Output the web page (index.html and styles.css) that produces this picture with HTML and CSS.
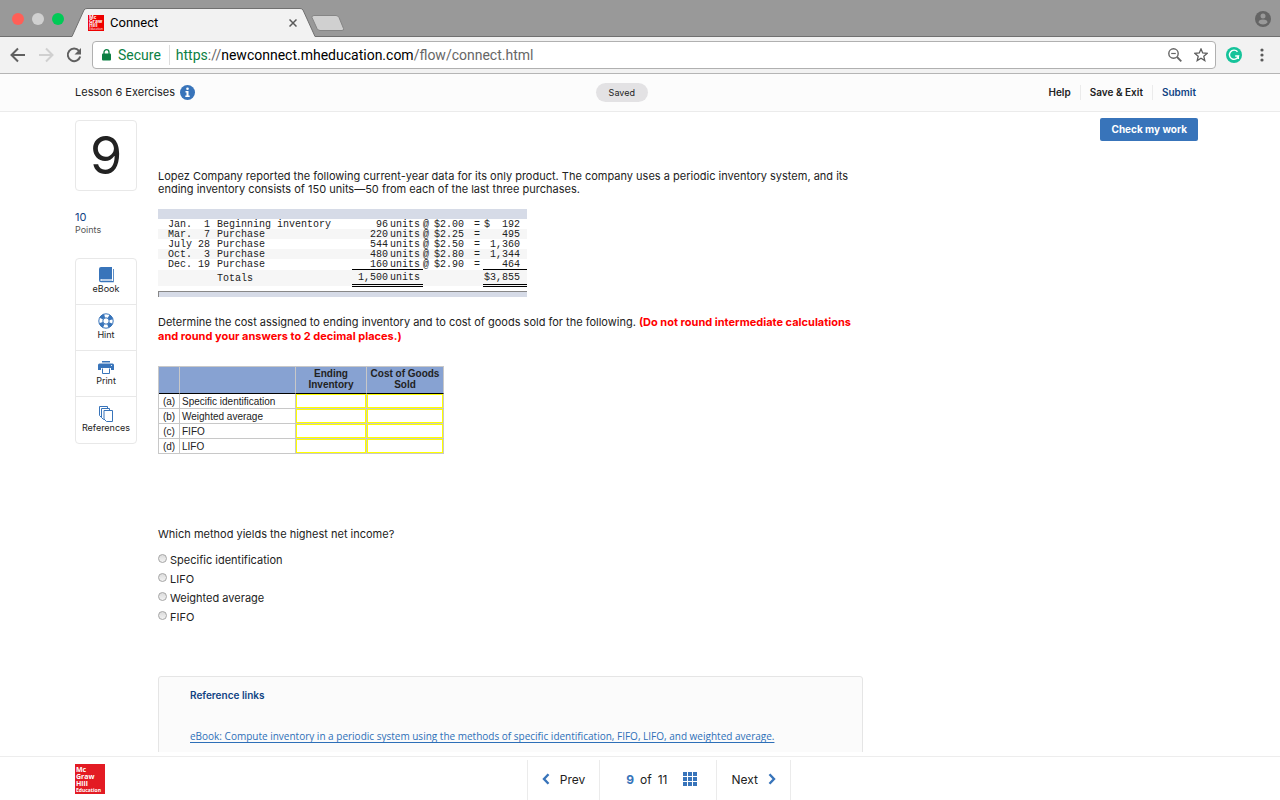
FILE: index.html
```html
<!DOCTYPE html>
<html lang="en">
<head>
    <meta charset="UTF-8">
    <meta name="viewport" content="width=device-width, initial-scale=1.0">
    <title>Connect</title>
    <link rel="stylesheet" href="styles.css">
</head>
<body>

<!-- Browser tabs -->
<div class="tab-bar">
    <span class="light red"></span>
    <span class="light gray"></span>
    <span class="light green"></span>
    <div class="tab">
        <svg class="tab-shape" viewBox="0 0 243 29" preserveAspectRatio="none">
            <path d="M0 28.500 L12 2 Q13 .5 15 .5 H228 Q230 .5 231 2 L243 28.500 V29 H0Z" fill="#f2f2f2"/>
            <path d="M0 28.500 L12 2 Q13 .5 15 .5 H228 Q230 .5 231 2 L243 28.500" fill="none" stroke="#707070"/>
        </svg>
        <span class="favicon"><b>Mc<br>Graw<br>Hill</b><i>Education</i></span>
        <span class="tab-title">Connect</span>
        <button class="tab-close" aria-label="Close tab">
            <svg width="8" height="8" viewBox="0 0 8 8"><path d="M.5 .5l7 7M7.500 .5l-7 7" stroke="#5a5a5a" stroke-width="1.500"/></svg>
        </button>
    </div>
    <svg class="new-tab" width="34" height="17" viewBox="0 0 34 17"><path d="M3 .5h22q2 0 3 2l4.500 11q.5 2-1.500 2H9q-2 0-3-2L1 2.500Q.5 .5 3 .5z" fill="#d0d0d0" stroke="#858585"/></svg>
    <svg class="profile" width="16" height="16" viewBox="0 0 16 16"><circle cx="8" cy="8" r="8" fill="#656565"/><circle cx="8" cy="5" r="2.500" fill="#999"/><path d="M3.500 11.500q0-3 4.500-3t4.500 3q-1.500 2-4.500 2t-4.500-2z" fill="#999"/></svg>
</div>

<!-- Address bar -->
<div class="toolbar">
    <button class="tool" aria-label="Back"><svg width="16" height="16" viewBox="0 0 16 16" fill="none" stroke="#606060" stroke-width="2"><path d="M15 8H2M8 1.500L1.500 8 8 14.500"/></svg></button>
    <button class="tool" aria-label="Forward"><svg width="16" height="16" viewBox="0 0 16 16" fill="none" stroke="#d0d0d0" stroke-width="2"><path d="M1 8h13M8 1.500L14.500 8 8 14.500"/></svg></button>
    <button class="tool" aria-label="Reload"><svg width="16" height="16" viewBox="0 0 16 16"><path d="M13 3.800A6.300 6.300 0 1 0 14.200 9.500" fill="none" stroke="#606060" stroke-width="2"/><path d="M15 1v6.500H8.500z" fill="#606060"/></svg></button>
    <div class="address">
        <svg width="9" height="12" viewBox="0 0 9 12"><rect y="4.500" width="9" height="7" rx="1" fill="#0b8043"/><path d="M2 5V3.200a2.500 2.500 0 0 1 5 0V5" fill="none" stroke="#0b8043" stroke-width="1.300"/></svg>
        <span class="secure">Secure</span>
        <span class="url"><span class="scheme">https</span>://<span class="host">newconnect.mheducation.com</span>/flow/connect.html</span>
        <svg class="zoom-icon" width="14" height="14" viewBox="0 0 14 14" fill="none" stroke="#666"><circle cx="5.500" cy="5.500" r="4.700" stroke-width="1.400"/><path d="M3.200 5.500h4.600" stroke-width="1.200"/><path d="M9 9l4.300 4.300" stroke-width="1.800"/></svg>
        <svg width="14" height="14" viewBox="0 0 14 14"><path d="M7 1l1.700 4 4.400.4-3.300 2.900 1 4.300L7 10.300l-3.800 2.300 1-4.300L.9 5.400l4.400-.4z" fill="none" stroke="#5c5c5c" stroke-width="1.300"/></svg>
    </div>
    <svg class="grammarly" width="16" height="16" viewBox="0 0 16 16"><circle cx="8" cy="8" r="8" fill="#15c39a"/><path d="M11.500 4.700A4.600 4.600 0 1 0 12.500 9H9.200M12.300 8.700v3.400" fill="none" stroke="#fff" stroke-width="1.400"/></svg>
    <svg width="4" height="14" viewBox="0 0 4 14" fill="#5a5a5a"><circle cx="2" cy="2" r="1.600"/><circle cx="2" cy="7" r="1.600"/><circle cx="2" cy="12" r="1.600"/></svg>
</div>

<!-- Assignment header -->
<header class="header">
    <div class="lesson">
        Lesson 6 Exercises
        <svg width="15" height="15" viewBox="0 0 15 15"><circle cx="7.500" cy="7.500" r="7.500" fill="#3874ba"/><circle cx="7.500" cy="3.800" r="1.300" fill="#fff"/><path d="M5.500 6h3v4.500h1.200V12H5.300v-1.500h1.200v-3h-1z" fill="#fff"/></svg>
    </div>
    <span class="saved">Saved</span>
    <nav class="header-links">
        <a href="#">Help</a>
        <a href="#">Save &amp; Exit</a>
        <a href="#" class="submit">Submit</a>
    </nav>
</header>

<div class="workspace">
    <aside class="sidebar">
        <div class="question-number">9</div>
        <div class="points">10</div>
        <div class="points-label">Points</div>
        <div class="resources">
            <button><svg width="16" height="16" viewBox="0 0 16 16"><path d="M3 0h11v12H3.500Q2.300 12 2.300 13t1.200 1H15V2h.8v13.300H3Q1 15.300 1 13V2q0-2 2-2z" fill="#3874ba"/><path d="M3.500 13H14" stroke="#3874ba" stroke-width=".7"/></svg>eBook</button>
            <button><svg width="16" height="16" viewBox="0 0 16 16" fill="none" stroke="#3874ba"><circle cx="8" cy="8" r="7.200"/><circle cx="8" cy="8" r="3.200"/><circle cx="8" cy="8" r="5.300" stroke-width="4" stroke-dasharray="4.160 4.160" stroke-dashoffset="-2.080"/></svg>Hint</button>
            <button><svg width="16" height="16" viewBox="0 0 16 16" fill="#3874ba"><path d="M4 2h8v1.500H4zM1.500 4.500h13Q16 4.500 16 6v5h-3V9H3v2H0V6Q0 4.500 1.500 4.500z"/><path d="M4.500 9.500v5h7v-5" fill="#fff" stroke="#3874ba"/><circle cx="13.500" cy="6.500" r=".6" fill="#fff"/></svg>Print</button>
            <button><svg width="16" height="16" viewBox="0 0 16 16" fill="#fff" stroke="#3874ba"><path d="M1.500 .5h8v11h-6l-2-2z"/><path d="M3.500 2.500h8v11h-6l-2-2z"/><path d="M6 4.500h8.500v11H8.500L6 13z"/></svg>References</button>
        </div>
    </aside>

    <main class="question">
        <p>Lopez Company reported the following current-year data for its only product. The company uses a periodic inventory system, and its ending inventory consists of 150 units—50 from each of the last three purchases.</p>

        <table class="inventory">
            <colgroup><col class="c-month"><col class="c-day"><col class="c-item"><col class="c-qty"><col class="c-units"><col class="c-at"><col class="c-price"><col class="c-eq"><col class="c-total"></colgroup>
            <thead><tr><td colspan="9"></td></tr></thead>
            <tbody>
                <tr><td>Jan.</td><td>1</td><td>Beginning inventory</td><td>96</td><td>units</td><td>@</td><td>$2.00</td><td>=</td><td>$&nbsp;&nbsp;192</td></tr>
                <tr><td>Mar.</td><td>7</td><td>Purchase</td><td>220</td><td>units</td><td>@</td><td>$2.25</td><td>=</td><td>495</td></tr>
                <tr><td>July</td><td>28</td><td>Purchase</td><td>544</td><td>units</td><td>@</td><td>$2.50</td><td>=</td><td>1,360</td></tr>
                <tr><td>Oct.</td><td>3</td><td>Purchase</td><td>480</td><td>units</td><td>@</td><td>$2.80</td><td>=</td><td>1,344</td></tr>
                <tr><td>Dec.</td><td>19</td><td>Purchase</td><td>160</td><td>units</td><td>@</td><td>$2.90</td><td>=</td><td>464</td></tr>
                <tr class="totals"><td></td><td></td><td>Totals</td><td class="sum">1,500</td><td class="sum">units</td><td></td><td></td><td></td><td class="sum">$3,855</td></tr>
            </tbody>
        </table>
        <div class="inventory-end"></div>

        <p class="task">Determine the cost assigned to ending inventory and to cost of goods sold for the following. <strong>(Do not round intermediate calculations and round your answers to 2 decimal places.)</strong></p>

        <table class="answers">
            <colgroup><col class="a-letter"><col class="a-method"><col class="a-ending"><col class="a-cogs"></colgroup>
            <thead><tr><th></th><th></th><th>Ending Inventory</th><th>Cost of Goods Sold</th></tr></thead>
            <tbody>
                <tr><td>(a)</td><td>Specific identification</td><td><input type="text" aria-label="Specific identification ending inventory"></td><td><input type="text" aria-label="Specific identification cost of goods sold"></td></tr>
                <tr><td>(b)</td><td>Weighted average</td><td><input type="text" aria-label="Weighted average ending inventory"></td><td><input type="text" aria-label="Weighted average cost of goods sold"></td></tr>
                <tr><td>(c)</td><td>FIFO</td><td><input type="text" aria-label="FIFO ending inventory"></td><td><input type="text" aria-label="FIFO cost of goods sold"></td></tr>
                <tr><td>(d)</td><td>LIFO</td><td><input type="text" aria-label="LIFO ending inventory"></td><td><input type="text" aria-label="LIFO cost of goods sold"></td></tr>
            </tbody>
        </table>

        <fieldset class="choices">
            <legend>Which method yields the highest net income?</legend>
            <label><input type="radio" name="method">Specific identification</label>
            <label><input type="radio" name="method">LIFO</label>
            <label><input type="radio" name="method">Weighted average</label>
            <label><input type="radio" name="method">FIFO</label>
        </fieldset>

        <section class="reference-links">
            <h2>Reference links</h2>
            <a href="#">eBook: Compute inventory in a periodic system using the methods of specific identification, FIFO, LIFO, and weighted average.</a>
        </section>
    </main>

    <button class="check">Check my work</button>
</div>

<footer class="footer">
    <div class="logo"><b>Mc<br>Graw<br>Hill</b><i>Education</i></div>
    <nav class="pager">
        <button><svg width="8" height="12" viewBox="0 0 8 12"><path d="M6.500 1.200L2 6l4.500 4.800" fill="none" stroke="#3874ba" stroke-width="2.400"/></svg>Prev</button>
        <div class="position"><b>9</b> <span>of</span> <span>11</span>
            <svg width="14" height="14" viewBox="0 0 14 14" fill="#3874ba"><path d="M0 0h4v4H0zM5 0h4v4H5zM10 0h4v4h-4zM0 5h4v4H0zM5 5h4v4H5zM10 5h4v4h-4zM0 10h4v4H0zM5 10h4v4H5zM10 10h4v4h-4z"/></svg>
        </div>
        <button>Next<svg width="8" height="12" viewBox="0 0 8 12"><path d="M1.500 1.200L6 6l-4.500 4.800" fill="none" stroke="#3874ba" stroke-width="2.400"/></svg></button>
    </nav>
</footer>

</body>
</html>
```
FILE: styles.css
```css
* {
    box-sizing: border-box;
}

body {
    margin: 0;
    height: 100vh;
    display: flex;
    flex-direction: column;
    overflow: hidden;
    background: #fff;
    color: #222;
    font-family: Inter, sans-serif;
    font-size: 11px;
}

button {
    font: inherit;
    color: inherit;
    background: none;
    border: none;
    padding: 0;
}

svg {
    flex: none;
}

/* Browser tabs */
.tab-bar {
    flex: none;
    display: flex;
    align-items: center;
    height: 37px;
    padding: 2px 9px 0 12px;
    background: #999;
    border-bottom: 1px solid #707070;
    font-family: Roboto, sans-serif;
}

.light {
    width: 12px;
    height: 12px;
    margin-right: 8px;
    border-radius: 50%;
}

.red { background: #ff5f57; }
.gray { background: #d0d0d0; }
.green { background: #00ca56; }

.tab {
    position: relative;
    align-self: flex-end;
    display: flex;
    align-items: center;
    width: 243px;
    height: 29px;
    margin-bottom: -1px;
    padding: 0 18px 0 16px;
}

.tab-shape {
    position: absolute;
    inset: 0;
    width: 100%;
    height: 100%;
}

.favicon,
.logo {
    position: relative;
    overflow: hidden;
    background: #e00;
    color: #fff;
    font-family: "Open Sans", sans-serif;
}

.favicon {
    width: 16px;
    height: 16px;
    padding-left: 1px;
    font-size: 5px;
    line-height: 4px;
}

.favicon i {
    display: block;
    font-size: 3px;
    font-style: normal;
    line-height: 4px;
}

.tab-title {
    position: relative;
    flex: 1;
    margin-left: 6px;
    color: #000;
    font-size: 13px;
}

.tab-close {
    position: relative;
    display: flex;
}

.new-tab {
    margin-left: -4px;
    margin-top: 9px;
}

.profile {
    margin-left: auto;
}

/* Address bar */
.toolbar {
    flex: none;
    display: flex;
    align-items: center;
    height: 37px;
    padding: 0 16px 0 10px;
    background: #f2f2f2;
    border-bottom: 1px solid #b5b5b5;
    font-family: Roboto, sans-serif;
}

.tool {
    display: flex;
    margin-right: 12px;
}

.address {
    flex: 1;
    display: flex;
    align-items: center;
    height: 28px;
    margin-right: 10px;
    margin-left: -2px;
    padding: 0 7px 0 9px;
    background: #fff;
    border: 1px solid #b0b0b0;
    border-radius: 4px;
    font-size: 14px;
}

.secure {
    margin-left: 7px;
    padding-right: 8px;
    border-right: 1px solid #ddd;
    color: #0b8043;
    line-height: 20px;
}

.url {
    flex: 1;
    margin-left: 6px;
    color: #666;
}

.scheme { color: #0b8043; }
.host { color: #000; }

.zoom-icon {
    margin-right: 12px;
}

.grammarly {
    margin-right: 18px;
}

/* Assignment header */
.header {
    flex: none;
    display: flex;
    align-items: center;
    justify-content: space-between;
    height: 38px;
    padding: 0 84px 1px 75px;
    background: #fcfcfc;
    border-bottom: 1px solid #ebebeb;
}

.lesson {
    display: flex;
    align-items: center;
    gap: 5px;
}

.saved {
    padding: 0 13px;
    border-radius: 10px;
    background: #e3e2e4;
    font-size: 9px;
    line-height: 19px;
}

.header-links {
    display: flex;
}

.header-links a {
    padding: 0 9px;
    border-right: 1px solid #ebebeb;
    color: #222;
    font-size: 10px;
    font-weight: 600;
    line-height: 15px;
    text-decoration: none;
}

.header-links a:first-child {
    padding-left: 0;
}

.header-links a:last-child {
    padding-right: 0;
    border-right: none;
}

.header-links .submit {
    color: #104383;
}

/* Question */
.workspace {
    flex: 1;
    min-height: 0;
    display: flex;
    align-items: flex-start;
    overflow: hidden;
    margin-bottom: 4px;
    padding: 0 82px 0 75px;
}

.sidebar {
    flex: none;
    width: 62px;
    margin-top: 8px;
}

.question-number {
    height: 71px;
    border: 1px solid #e8e8e8;
    border-radius: 4px;
    font-size: 52px;
    line-height: 69px;
    text-align: center;
}

.points {
    margin-top: 19px;
    color: #104383;
    line-height: 14px;
}

.points-label {
    color: #555;
    font-size: 9px;
    line-height: 12px;
}

.resources {
    margin-top: 22px;
    border: 1px solid #e8e8e8;
    border-radius: 4px;
}

.resources button {
    display: flex;
    flex-direction: column;
    align-items: center;
    justify-content: center;
    width: 100%;
    height: 46px;
    padding-bottom: 2px;
    border-bottom: 1px solid #e8e8e8;
    font-size: 9px;
    line-height: 11px;
}

.resources button:last-child {
    border-bottom: none;
}

.question {
    flex: 0 1 705px;
    margin-left: 21px;
}

.question p {
    margin: 58px 0 13px;
    line-height: 13px;
}

.question .task {
    margin: 18px 0 23px;
    line-height: 14px;
}

.task strong {
    color: #f00;
}

/* Inventory data */
.inventory {
    width: 369px;
    table-layout: fixed;
    border-collapse: collapse;
    font-family: "Liberation Mono", monospace;
    font-size: 10px;
    line-height: 8px;
}

.c-month { width: 40px; }
.c-day { width: 12px; }
.c-item { width: 142px; }
.c-qty { width: 37px; }
.c-units { width: 34px; }
.c-at { width: 11px; }
.c-price { width: 40px; }
.c-eq { width: 9px; }
.c-total { width: 44px; }

.inventory td {
    height: 10px;
    padding: 2px 0 0;
    white-space: nowrap;
}

.inventory thead td {
    background: #d6dbe7;
}

.inventory tbody tr:nth-child(even) {
    background: #f6f6f6;
}

.inventory td:first-child { padding-left: 10px; }
.inventory td:nth-child(2) { text-align: right; }
.inventory td:nth-child(3) { padding-left: 7px; }
.inventory td:nth-child(4) { padding-right: 1px; text-align: right; }
.inventory td:nth-child(5) { padding-left: 1px; }
.inventory td:nth-child(9) { padding-right: 7px; text-align: right; }

.inventory .totals td {
    height: 16px;
}

.inventory .totals .sum {
    border-top: 1px solid #000;
    border-bottom: 3px double #000;
}

.inventory-end {
    width: 369px;
    height: 6px;
    margin-top: 4px;
    background: #d6dbe7;
    border-top: 1px solid #888;
    border-left: 1px solid #888;
}

/* Answer grid */
.answers {
    width: 286px;
    table-layout: fixed;
    border-collapse: separate;
    border-spacing: 0;
    border-top: 1px solid #c8c8c8;
    border-left: 1px solid #c8c8c8;
    font-family: "Liberation Sans", Arial, sans-serif;
    font-size: 10px;
    line-height: 11px;
}

.a-letter { width: 21px; }
.a-method { width: 116px; }
.a-ending { width: 71px; }
.a-cogs { width: 77px; }

.answers th {
    height: 27px;
    padding: 0 0 2px;
    background: #87a2d2;
    border-right: 1px solid #c8c8c8;
    border-bottom: 1px solid #000;
}

.answers td {
    height: 15px;
    padding: 0 2px;
    border-right: 1px solid #c8c8c8;
    border-bottom: 1px solid #c8c8c8;
    white-space: nowrap;
}

.answers td:first-child {
    padding: 0;
    text-align: center;
}

.answers td:nth-child(n+3) {
    padding: 0;
}

.answers input {
    display: block;
    width: 100%;
    height: 14px;
    padding: 0 2px;
    border: 1px solid #ff0;
    font: inherit;
}

/* Multiple choice */
.choices {
    margin: 73px 0 0;
    padding: 0;
    border: none;
}

.choices legend {
    margin-bottom: 10px;
    padding: 0;
    line-height: 14px;
}

.choices label {
    display: flex;
    align-items: center;
    line-height: 19px;
}

.choices input {
    appearance: none;
    width: 9px;
    height: 9px;
    margin: 0 3px 4px 0;
    border: 1px solid #a5a5a5;
    border-radius: 50%;
    background: linear-gradient(#dcdcdc, #f2f2f2);
}

.reference-links {
    height: 160px;
    margin-top: 49px;
    padding: 11px 31px;
    background: #fbfbfb;
    border: 1px solid #e5e5e5;
    border-radius: 3px;
    font-size: 10px;
    white-space: nowrap;
}

.reference-links h2 {
    margin: 0 0 27px;
    color: #104383;
    font-size: 10px;
    font-weight: 600;
    line-height: 14px;
}

.reference-links a {
    color: #2d6fb8;
    font-family: "Open Sans", sans-serif;
    line-height: 14px;
    text-underline-offset: 2px;
}

.check {
    flex: none;
    margin-top: 6px;
    margin-left: auto;
    padding: 0 11px;
    border-radius: 2px;
    background: #3874ba;
    color: #fff;
    font-size: 10px;
    font-weight: 700;
    line-height: 23px;
}

/* Footer */
.footer {
    flex: none;
    display: flex;
    height: 44px;
    padding-left: 75px;
    border-top: 1px solid #ededed;
}

.logo {
    flex: none;
    width: 30px;
    height: 30px;
    margin-top: 7px;
    padding-left: 1px;
    background: #e31b23;
    font-size: 7px;
    line-height: 7px;
}

.logo b {
    display: block;
    padding-top: 2px;
}

.logo i {
    display: block;
    font-size: 5px;
    font-style: normal;
    font-weight: 700;
    line-height: 6px;
}

.pager {
    display: flex;
    margin-top: 3px;
    margin-left: 35%;
    border-left: 1px solid #ebebeb;
    font-size: 12px;
}

.pager > * {
    display: flex;
    align-items: center;
    gap: 10px;
    padding: 0 14px 2px;
    border-right: 1px solid #ebebeb;
}

.pager .position {
    gap: 6px;
    padding: 0 19px 2px 26px;
}

.position b {
    color: #3874ba;
}

.position svg {
    margin-left: 10px;
}
```
